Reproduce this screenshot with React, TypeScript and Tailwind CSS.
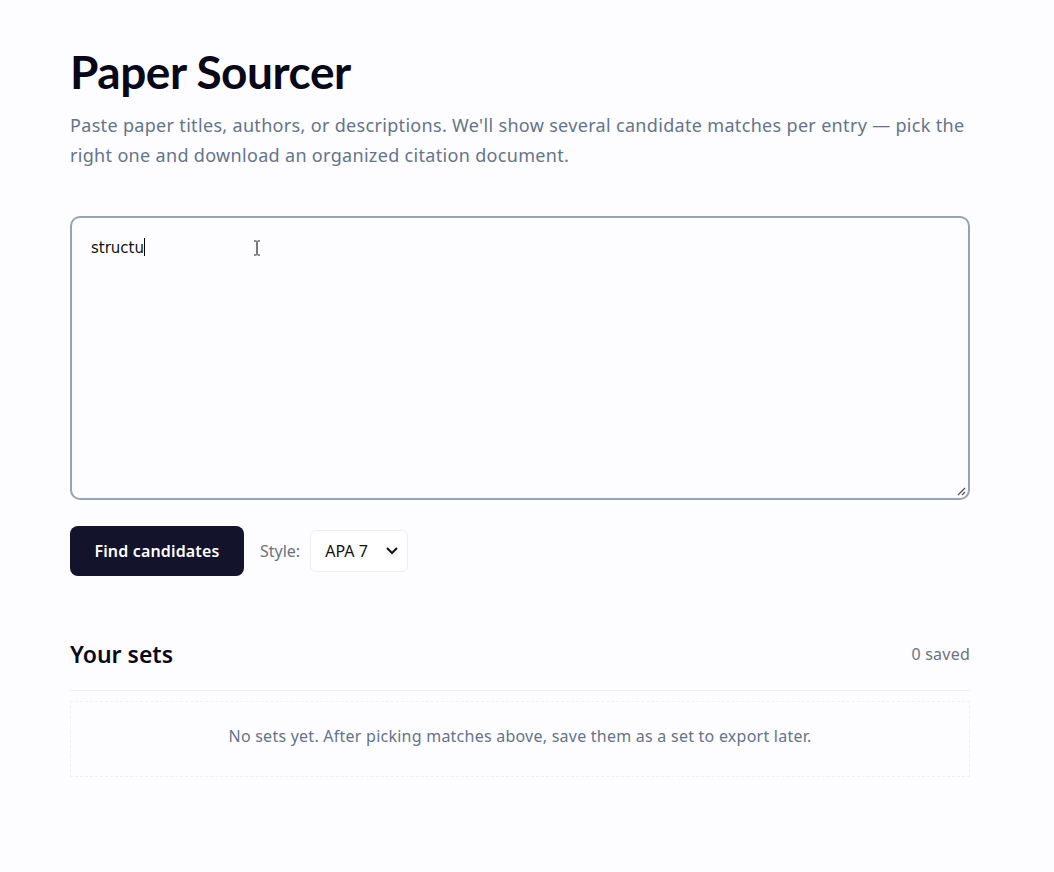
import React from "react";

export default function App() {
  return (
    <div
      className="min-h-screen bg-[#fdfcfe] text-[#0b0b1a]"
      style={{ fontFamily: '"Noto Sans", "Open Sans", sans-serif' }}
    >
      <div className="w-[900px] ml-[70px] pt-[42px]">
        <h1
          className="text-[46px] leading-[60px] font-bold tracking-[-0.01em] text-[#080818]"
          style={{ fontFamily: 'Lato, "Noto Sans", sans-serif' }}
        >
          Paper Sourcer
        </h1>
        <p className="mt-[8px] text-[18px] leading-[30px] text-[#64748b] tracking-[0.018em]">
          Paste paper titles, authors, or descriptions. We'll show several candidate matches per entry — pick the right one and download an organized citation document.
        </p>

        <div className="mt-[46px] h-[284px] rounded-[10px] border-2 border-[#94a3b8] bg-[#fdfcfe] px-[19px] pt-[18px] relative">
          <div
            className="text-[16px] leading-[24px] text-[#111]"
            style={{ fontFamily: '"DejaVu Sans", "Noto Sans", sans-serif', fontSize: 15 }}
          >
            structu<span className="inline-block w-[1px] h-[18px] bg-black align-[-3px]" />
          </div>
          <svg className="absolute left-[181px] top-[22px]" width="8" height="16" viewBox="0 0 8 16">
            <path d="M1 1h2.5M4.5 1H7M4 1.5v13M1 15h2.5M4.5 15H7" stroke="#222" strokeWidth="1.2" fill="none" />
          </svg>
          <svg className="absolute right-[2px] bottom-[2px]" width="10" height="10" viewBox="0 0 10 10">
            <path d="M9 2L2 9M9 6L6 9" stroke="#555" strokeWidth="1.3" fill="none" />
          </svg>
        </div>

        <div className="mt-[26px] flex items-center">
          <button className="h-[50px] w-[174px] rounded-[8px] bg-[#13132b] text-white text-[16px] font-semibold tracking-[0.01em]">
            Find candidates
          </button>
          <span className="ml-[16px] text-[16px] text-[#6b7280]">Style:</span>
          <div className="ml-[10px] h-[42px] w-[98px] rounded-[6px] border border-[#eceef2] bg-white flex items-center justify-between pl-[14px] pr-[9px]">
            <span className="text-[16px] text-[#111]">APA 7</span>
            <svg width="12" height="8" viewBox="0 0 12 8">
              <path d="M1.5 1.5L6 6l4.5-4.5" stroke="#111" strokeWidth="2" fill="none" strokeLinecap="round" />
            </svg>
          </div>
        </div>

        <div className="mt-[60px] flex items-center justify-between pb-[18px] border-b border-[#eef0f3]">
          <h2 className="text-[23px] leading-[36px] font-semibold text-[#080818]">Your sets</h2>
          <span className="text-[16px] text-[#6b7280] tracking-[0.015em]">0 saved</span>
        </div>

        <div className="mt-[10px] h-[76px] pb-[6px] border border-dashed border-[#eef0f3] flex items-center justify-center">
          <span className="text-[16px] text-[#64748b] tracking-[0.015em]">
            No sets yet. After picking matches above, save them as a set to export later.
          </span>
        </div>
      </div>
    </div>
  );
}
